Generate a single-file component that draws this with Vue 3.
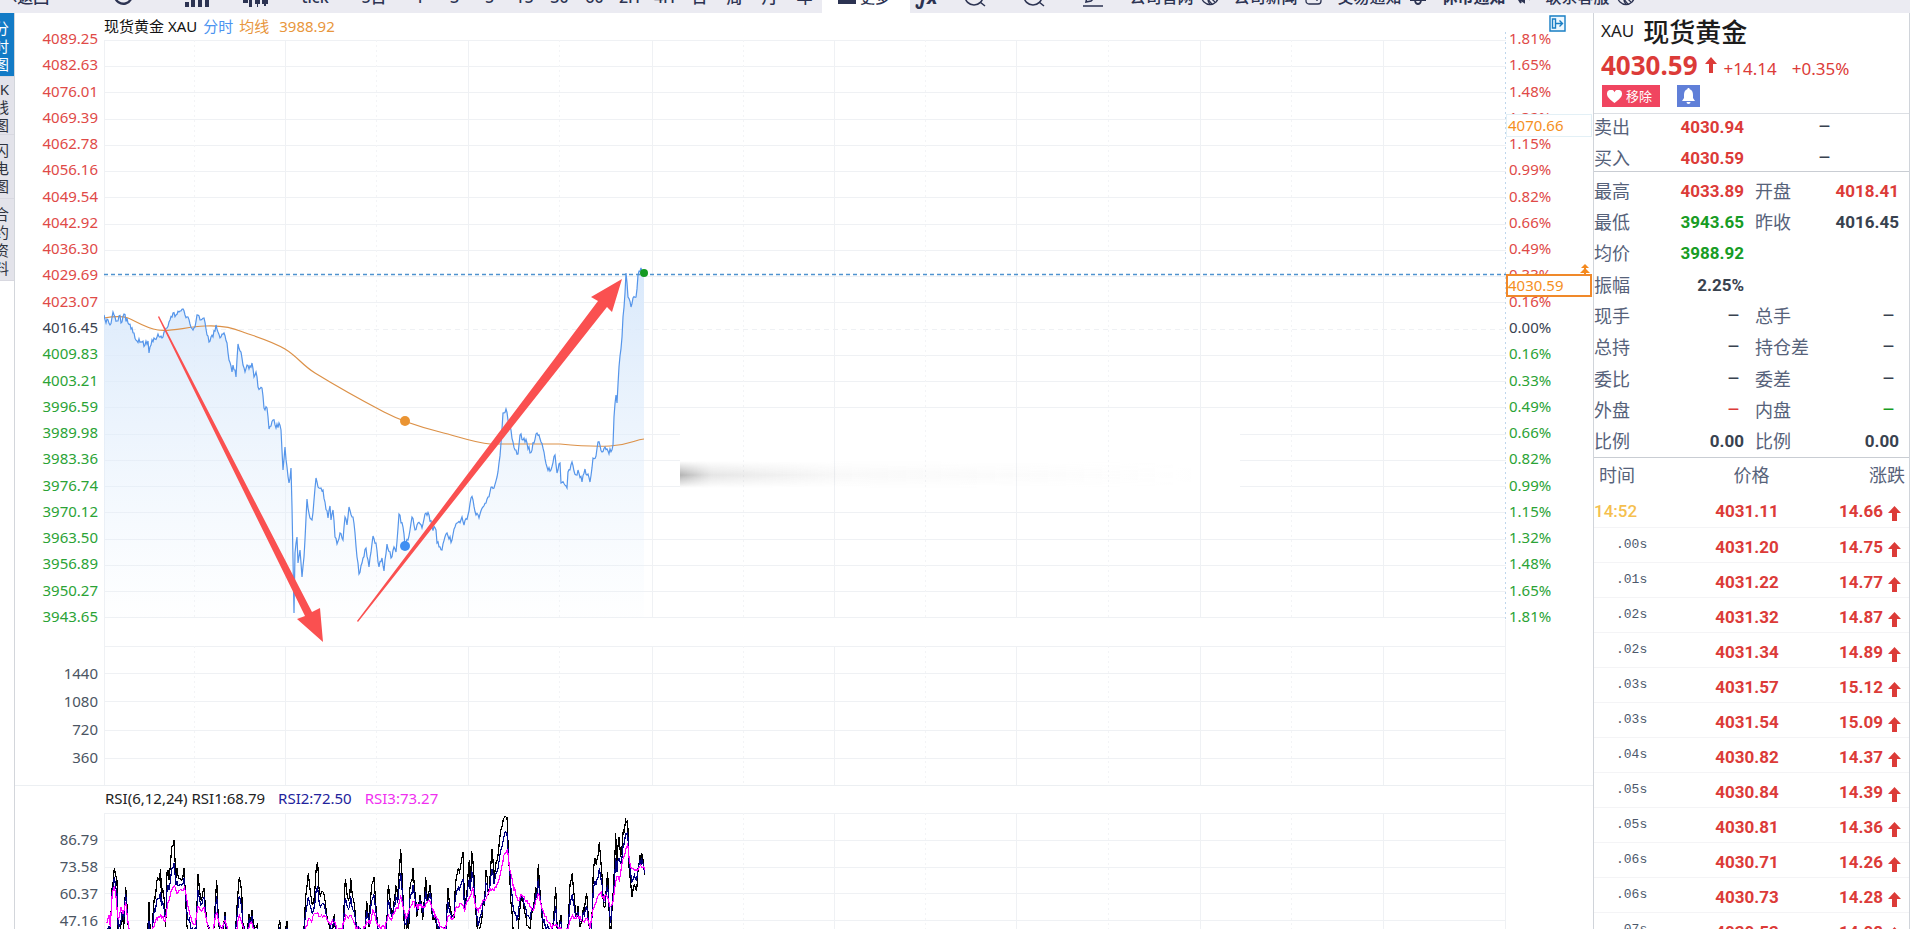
<script setup>
const periods = ['1', '3', '5', '15', '30', '60', '2H', '4H', '日', '周', '月', '年']
const links = [
  { text: '公司官网', icon: 'globe' },
  { text: '公司新闻', icon: 'news' },
  { text: '交易通知', icon: 'bell' },
  { text: '休市通知', icon: 'horn', strong: true },
  { text: '联系客服', icon: 'globe' },
]
const tabs = [
  { chars: '分时图', active: true },
  { chars: 'K线图', tight: true },
  { chars: '闪电图' },
  { chars: '合约资料' },
]

const prices = ['4089.25', '4082.63', '4076.01', '4069.39', '4062.78', '4056.16', '4049.54', '4042.92', '4036.30', '4029.69', '4023.07', '4016.45', '4009.83', '4003.21', '3996.59', '3989.98', '3983.36', '3976.74', '3970.12', '3963.50', '3956.89', '3950.27', '3943.65']
const half = ['1.81%', '1.65%', '1.48%', '1.32%', '1.15%', '0.99%', '0.82%', '0.66%', '0.49%', '0.33%', '0.16%']
const percents = [...half, '0.00%', ...[...half].reverse()]
const tone = (i) => (i < 11 ? 'up' : i > 11 ? 'down' : 'flat')
const volumes = ['1440', '1080', '720', '360']
const rsiLevels = ['86.79', '73.58', '60.37', '47.16']

const rowLines = Array.from({ length: 23 }, (_, i) => Math.round(40 + i * 26.24) + 0.5)
const lowLines = [645.5, 672.5, 700.5, 729.5, 757.5, 812.5, 839.5, 866.5, 892.5, 919.5].map((y) => y + 1)
const mainCols = [285.5, 468.5, 652.5, 834.5, 1016.5, 1200.5, 1383.5]
const midCols = [194.5, 376.5, 559.5, 743.5, 925.5, 1108.5, 1291.5]

// Adds a small repeatable ripple between the key points of a series
function ripple(points, step, amp) {
  const out = []
  let seed = 7
  points.forEach(([x, y], i) => {
    out.push([x, y])
    const next = points[i + 1]
    if (!next) return
    const n = Math.floor((next[0] - x) / step)
    for (let k = 1; k < n; k++) {
      seed = (seed * 1103515245 + 12345) % 2147483648
      const t = k / n
      const d = (seed / 2147483648 - 0.5) * 2 * amp
      out.push([x + (next[0] - x) * t, y + (next[1] - y) * t + d])
    }
  })
  return out
}
const pair = (s) => s.trim().split(/\s+/).map((p) => p.split(',').map(Number))
const toLine = (pts) => pts.map(([x, y]) => x.toFixed(1) + ',' + y.toFixed(1)).join(' ')

const priceKeys = pair(`104,315 106,323 107,319 110,325 113,312 115,317 117,321 119,316 122,322 124,314 128,323 131,329 134,333 137,341 142,342
145,345 148,341 149,353 151,345 154,338 157,337 158,334 161,336 163,337 167,328 170,320 173,313 176,315 179,312 183,309 185,315 188,317 190,324
193,330 195,327 197,315 200,320 204,318 207,335 209,342 211,337 213,337 216,325 218,332 221,337 224,333 227,343 229,360 232,372 233,365 236,377
238,344 241,352 243,365 245,372 247,365 249,369 252,363 254,377 256,372 258,387 262,388 264,408 267,408 269,429 273,420 276,428 279,423 281,430
283,470 285,447 287,467 289,483 291,468 292,507 294,613 295,553 297,537 298,563 300,550 301,563 302,577 304,557 307,499 310,518 312,520 314,500
316,478 319,488 323,490 325,502 328,518 330,506 331,520 333,510 335,537 337,544 340,533 343,540 345,517 347,525 349,507 353,517 355,533 357,557
359,574 362,563 366,548 369,567 373,536 376,543 379,567 382,558 384,571 387,544 391,558 394,547 396,552 399,514 403,527 405,546 408,540 412,517
415,530 418,523 422,528 425,514 429,515 432,527 436,530 437,543 442,550 447,533 449,539 452,540 455,527 462,517 464,525 468,515 471,498 473,500
476,515 479,518 483,507 488,497 492,487 494,488 497,477 499,463 501,443 503,413 506,409 509,422 511,430 513,442 516,450 518,454 520,435 523,440
527,443 530,453 534,443 537,433 541,442 544,452 547,467 551,470 555,455 557,473 560,463 561,483 567,488 568,472 572,462 576,475 578,470 582,482
585,469 590,482 593,458 596,456 598,442 602,452 605,447 609,454 613,445 614,417 616,395 617,403 619,367 622,337 623,317 625,293 626,273 628,297
631,307 633,298 636,297 638,275 641,268 644,273`)
const priceLine = toLine(ripple(priceKeys, 1, 3))
const priceArea = `104,618 ${priceLine} 644,618`
const avgPath = 'M104 318 C110 317 122 316 128 318 S145 328 158 330 S185 327 205 326 S235 329 243 332 S272 341 285 349 S302 365 315 373 S365 402 384 412 S420 427 440 432 S475 443 490 444 L560 444 S590 447 610 446 S634 440 644 439'

// RSI keys are stored on a grid three times finer than a pixel
const rsiFast = pair(`35,400 46,390 52,250 58,203 66,240 70,420 82,330 86,390 92,262 97,330 103,400 130,440 158,400 162,305 166,400 170,420 175,330 188,235
192,240 197,206 199,290 203,265 208,300 212,380 216,217 222,240 230,140 237,120 240,180 243,235 246,205 255,235 260,240 267,204 272,300 276,380 290,430
303,420 309,222 314,275 320,300 327,265 332,330 345,420 355,420 365,240 372,380 382,400 390,335 396,420 420,430 428,290 433,230 440,275 445,400 458,430
460,345 466,370 471,330 478,380 487,375 495,440 545,440 554,360 560,400 570,430 576,363 582,430 625,430 632,290 640,220 648,290 656,310 664,200 668,187
672,265 680,275 690,300 697,360 705,385 712,400 718,343 724,400 742,430 751,237 757,290 764,290 767,233 776,300 785,400 808,420 815,302 822,380 830,255
837,230 842,310 853,420 873,430 880,255 887,320 893,350 902,255 908,290 917,147 923,270 929,400 937,360 941,400 944,270 954,205 959,270 965,350 975,285
983,360 992,230 997,300 1005,255 1011,340 1020,360 1040,420 1053,400 1059,265 1067,330 1077,350 1083,240 1090,205 1096,205 1104,155 1109,330 1115,290
1123,180 1126,260 1130,152 1137,230 1143,340 1150,420 1158,370 1170,280 1173,210 1180,285 1187,200 1191,148 1197,240 1207,180 1217,90 1225,58 1236,53
1241,180 1247,300 1255,400 1265,430 1280,290 1290,340 1305,390 1315,320 1322,260 1325,290 1330,193 1337,300 1345,400 1370,430 1382,262 1387,400 1398,345
1402,430 1417,420 1425,255 1432,218 1438,290 1445,350 1449,318 1455,380 1475,280 1480,350 1488,420 1495,210 1500,175 1506,180 1513,125 1519,200 1525,310
1531,320 1538,215 1541,310 1547,420 1555,270 1562,100 1566,200 1572,110 1577,170 1585,90 1598,62 1602,200 1607,250 1611,290 1615,265 1625,270 1635,165
1638,195 1640,160 1649,225`)
const rsiSlow = pair(`35,370 42,345 46,380 52,280 58,258 63,290 70,360 78,320 84,340 92,305 97,350 105,400 130,420 165,420 175,380 190,350 197,345 204,350
210,365 218,310 225,290 232,268 238,258 245,280 255,270 262,272 268,262 276,300 285,345 292,370 300,375 309,320 316,330 327,322 335,365 345,390 355,390
365,335 370,360 380,390 390,360 400,400 422,400 433,345 442,375 455,400 470,365 480,400 550,410 620,410 635,380 642,355 650,365 660,340 668,337 676,350
690,350 700,365 718,365 728,390 742,385 752,345 760,355 768,345 780,375 800,400 815,365 825,370 834,330 840,345 850,380 870,385 880,345 890,360 902,325
910,325 917,290 925,325 933,355 943,330 954,305 963,320 990,320 1005,305 1013,330 1025,355 1035,380 1050,385 1059,350 1075,355 1085,320 1103,315 1109,335
1115,305 1125,290 1133,262 1140,310 1150,335 1165,300 1175,290 1185,265 1195,270 1207,250 1220,200 1230,160 1237,148 1243,200 1253,250 1265,290 1273,300
1280,285 1290,300 1305,320 1315,330 1323,300 1330,280 1337,310 1350,350 1370,385 1385,375 1397,385 1420,385 1432,345 1443,355 1455,350 1465,365 1475,355
1485,385 1493,330 1505,300 1515,280 1525,290 1537,290 1545,320 1555,300 1565,230 1573,240 1583,180 1598,130 1605,190 1613,205 1625,210 1637,195 1649,210`)
function at(points, x) {
  const i = points.findIndex((p) => p[0] >= x)
  if (i <= 0) return points[0][1]
  const [a, b] = [points[i - 1], points[i]]
  return a[1] + ((b[1] - a[1]) * (x - a[0])) / (b[0] - a[0])
}
const rsiMid = rsiFast.map(([x, y]) => [x, y * 0.5 + at(rsiSlow, x) * 0.5])
const scale = (pts) => pts.map(([x, y]) => [95 + x / 3, 800 + Math.max(y, 50) / 3])
const rsiLines = [
  { color: '#000000', points: toLine(scale(ripple(rsiFast, 3, 18))) },
  { color: '#000080', points: toLine(scale(ripple(rsiMid, 3, 14))) },
  { color: '#ff00ff', points: toLine(scale(ripple(rsiSlow, 3, 8))) },
]

const depth = [
  { label: '卖出', value: '4030.94' },
  { label: '买入', value: '4030.59' },
]
const stats = [
  ['最高', '4033.89', 'up', '开盘', '4018.41', 'up'],
  ['最低', '3943.65', 'down', '昨收', '4016.45', 'flat'],
  ['均价', '3988.92', 'down', '', '', ''],
  ['振幅', '2.25%', 'flat', '', '', ''],
  ['现手', '–', 'flat', '总手', '–', 'flat'],
  ['总持', '–', 'flat', '持仓差', '–', 'flat'],
  ['委比', '–', 'flat', '委差', '–', 'flat'],
  ['外盘', '–', 'up', '内盘', '–', 'down'],
  ['比例', '0.00', 'flat', '比例', '0.00', 'flat'],
]
const trades = [
  ['14:52', '4031.11', '14.66'], ['.00s', '4031.20', '14.75'], ['.01s', '4031.22', '14.77'],
  ['.02s', '4031.32', '14.87'], ['.02s', '4031.34', '14.89'], ['.03s', '4031.57', '15.12'],
  ['.03s', '4031.54', '15.09'], ['.04s', '4030.82', '14.37'], ['.05s', '4030.84', '14.39'],
  ['.05s', '4030.81', '14.36'], ['.06s', '4030.71', '14.26'], ['.06s', '4030.73', '14.28'],
  ['.07s', '4030.53', '14.08'],
]
</script>

<template>
  <div class="app">
    <header class="toolbar">
      <nav class="tools" aria-label="工具栏">
        <button class="tool back">‹返回</button>
        <button class="tool refresh" aria-label="刷新">
          <svg width="22" height="22" viewBox="0 0 22 22" fill="none" stroke="currentColor" stroke-width="2.4"><path d="M18 5a8.5 8.5 0 1 0 1 9M19 2v5h-5" /></svg>
        </button>
        <button class="tool bars" aria-label="分时">
          <svg width="24" height="22" viewBox="0 0 24 22" fill="currentColor"><path d="M0 17h4v5H0zM6 10h4v12H6zM13 5h4v17h-4zM20 0h4v22h-4z" /></svg>
        </button>
        <button class="tool candle" aria-label="K线">
          <svg width="26" height="22" viewBox="0 0 26 22" fill="currentColor"><path d="M0 14h5v4H0zM6 2h3v20H6zM12 6h5v13h-5zM14 2h1v20h-1zM19 6h6v13h-6zM21 2h2v19h-2z" /></svg>
        </button>
        <button class="tool tick">tick</button>
        <button class="tool days">5日</button>
        <button v-for="p in periods" :key="p" class="tool period">{{ p }}</button>
        <button class="tool more">
          <svg width="18" height="18" viewBox="0 0 18 18" fill="currentColor"><path d="M0 0h18v3H0zM0 7h18v3H0zM0 14h18v4H0z" /></svg>更多
        </button>
        <button class="tool fx">ƒx</button>
        <button class="tool lens" aria-label="放大">
          <svg width="22" height="22" viewBox="0 0 22 22" fill="none" stroke="currentColor" stroke-width="1.6"><circle cx="10" cy="11" r="9" /><path d="M16 17l5 4M6 11h8M10 7v8" /></svg>
        </button>
        <button class="tool lens" aria-label="缩小">
          <svg width="22" height="22" viewBox="0 0 22 22" fill="none" stroke="currentColor" stroke-width="1.6"><circle cx="10" cy="11" r="9" /><path d="M16 17l5 4M6 11h8" /></svg>
        </button>
        <button class="tool lens" aria-label="画线">
          <svg width="20" height="22" viewBox="0 0 20 22" fill="none" stroke="currentColor" stroke-width="1.6"><path d="M0 21h20M3 17l1-5L14 2l4 4L8 16z" /></svg>
        </button>
        <a v-for="l in links" :key="l.text" href="#" class="tool link" :class="{ strong: l.strong }">
          {{ l.text }}
          <svg width="18" height="20" viewBox="0 0 18 20" fill="none" stroke="currentColor" stroke-width="1.3">
            <template v-if="l.icon === 'globe'"><circle cx="9" cy="10" r="8.5" /><path d="M2 5c3 4 4 8 9 13M5 2c2 6 4 10 9 14M9 18c-4-4-1-8 2-7s4 3 5 3" /></template>
            <path v-else-if="l.icon === 'news'" d="M1 2h15v13a3 3 0 0 1-3 3H4a3 3 0 0 1-3-3zM4 9h6M4 13h6M12 7v8" />
            <path v-else-if="l.icon === 'bell'" d="M1 14h16M3 14c2-3 0-9 6-11 6 2 4 8 6 11M6 15c1 4 5 4 6 0" stroke-width="1.8" />
            <path v-else d="M1 7h4l6-5v14l-6-4H1zM5 12l3 5M14 5l3 9" stroke-width="2" />
          </svg>
        </a>
      </nav>
    </header>

    <div class="body">
      <nav class="tabs" aria-label="图表类型">
        <button v-for="t in tabs" :key="t.chars" class="tab" :class="{ active: t.active, tight: t.tight }">
          <span v-for="c in t.chars" :key="c">{{ c }}</span>
        </button>
      </nav>

      <main class="chart">
        <div class="axis left">
          <ul class="scale price"><li v-for="(p, i) in prices" :key="p" :class="tone(i)">{{ p }}</li></ul>
          <ul class="scale volume"><li v-for="v in volumes" :key="v">{{ v }}</li></ul>
          <ul class="scale rsi"><li v-for="r in rsiLevels" :key="r">{{ r }}</li></ul>
        </div>

        <svg class="plot" viewBox="104 13 1402 916" preserveAspectRatio="none">
          <defs>
            <linearGradient id="area" gradientUnits="userSpaceOnUse" x1="0" y1="270" x2="0" y2="610">
              <stop offset="0" stop-color="#dae9fb" /><stop offset="1" stop-color="#e2effc" stop-opacity="0.05" />
            </linearGradient>
            <linearGradient id="fade">
              <stop offset="0" stop-color="#666" stop-opacity="0.5" /><stop offset="0.06" stop-color="#888" stop-opacity="0.22" />
              <stop offset="0.3" stop-color="#aaa" stop-opacity="0.08" /><stop offset="1" stop-color="#aaa" stop-opacity="0" />
            </linearGradient>
            <linearGradient id="soft" x2="0" y2="1">
              <stop offset="0" stop-color="#000" /><stop offset="0.52" stop-color="#fff" /><stop offset="1" stop-color="#000" />
            </linearGradient>
            <mask id="band"><rect x="680" y="461" width="520" height="27" fill="url(#soft)" /></mask>
          </defs>
          <g class="grid">
            <path v-for="y in rowLines" :key="y" :d="`M104 ${y}H1506`" :class="{ zero: y === rowLines[11] }" />
          </g>
          <rect x="680" y="425" width="560" height="72" fill="#fff" />
          <g class="grid">
            <path v-for="y in lowLines" :key="y" :d="`M104 ${y}H1506`" />
            <path v-for="x in mainCols" :key="x" :d="`M${x} 40V618M${x} 646V785M${x} 813V929`" />
            <path v-for="x in midCols" :key="x" class="dots" :d="`M${x} 40V618M${x} 646V785M${x} 813V929`" />
            <path d="M104.5 40V785M104.5 813V929M1505.5 620V929" />
          </g>
          <path class="edge" d="M1505.5 32V620" />
          <rect x="680" y="461" width="520" height="27" fill="url(#fade)" mask="url(#band)" />
          <polygon :points="priceArea" fill="url(#area)" />
          <path :d="avgPath" fill="none" stroke="#dc9148" stroke-width="1.2" />
          <polyline :points="priceLine" fill="none" stroke="#5595ea" stroke-width="1.2" />
          <path class="current" d="M104 274.500H1506" />
          <polyline v-for="l in rsiLines" :key="l.color" :points="l.points" fill="none" :stroke="l.color" stroke-width="1.2" shape-rendering="crispEdges" />
          <circle cx="405" cy="421" r="5" fill="#ea9433" />
          <circle cx="405" cy="546" r="5" fill="#3f8ff2" />
          <circle cx="644" cy="273" r="4" fill="#159a22" />
          <g fill="#fa5050">
            <polygon points="158,317 305,616 297,619 323,642 320,608 312,612 159,316" />
            <polygon points="357,621 598,301 591,297 622,279 612,312 607,307 358,622" />
          </g>
        </svg>

        <div class="legends">
          <p class="legend"><b>现货黄金 XAU</b><span class="line">分时</span><span class="avg">均线</span><span class="avg value">3988.92</span></p>
          <p class="legend lower"><b>RSI(6,12,24) RSI1:68.79</b><span class="rsi2">RSI2:72.50</span><span class="rsi3">RSI3:73.27</span></p>
        </div>

        <div class="axis right">
          <ul class="scale price"><li v-for="(p, i) in percents" :key="i" :class="tone(i)">{{ p }}</li></ul>
          <button class="expand" aria-label="展开">
            <svg width="17" height="17" viewBox="0 0 17 17" fill="none" stroke="#1b7fc4" stroke-width="1.400"><path d="M1 1h15v15H1zM3.500 4h3v9h-3zM7 8.500h6M10.500 5.500l3 3-3 3" /></svg>
          </button>
          <span class="tag cursor">4070.66</span>
          <span class="tag last">4030.59</span>
          <svg class="pin" width="10" height="10" viewBox="0 0 10 10" fill="#f58a1f"><path d="M5 0l4 4H6v1l4 4H6v1H4V9H0l4-4V4H1z" /></svg>
        </div>
      </main>

      <aside class="panel">
        <header class="quote">
          <h1><small>XAU</small>现货黄金</h1>
          <p class="now up">
            <strong>4030.59</strong>
            <svg width="12" height="16" viewBox="0 0 12 16" fill="currentColor"><path d="M6 0l6 7H8v9H4V7H0z" /></svg>
            <span>+14.14</span><span>+0.35%</span>
          </p>
          <div class="actions">
            <button class="remove">
              <svg width="15" height="13" viewBox="0 0 15 13" fill="#fff"><path d="M7.500 13C3 9.500 0 7 0 4a3.900 3.900 0 0 1 7.500-1.800A3.900 3.900 0 0 1 15 4c0 3-3 5.500-7.500 9z" /></svg>移除
            </button>
            <button class="alert" aria-label="提醒">
              <svg width="13" height="16" viewBox="0 0 13 16" fill="#fff"><path d="M6.500 0c.8 0 1.200.6 1.200 1.300C10 2 11 4 11 7v3l2 3H0l2-3V7c0-3 1-5 3.300-5.700C5.300.6 5.700 0 6.500 0zM4.500 14h4a2 2 0 0 1-4 0z" /></svg>
            </button>
          </div>
        </header>

        <dl class="depth">
          <div v-for="d in depth" :key="d.label" class="row">
            <dt>{{ d.label }}</dt><dd class="up">{{ d.value }}</dd><dd class="dash size">–</dd>
          </div>
        </dl>

        <dl class="stats">
          <div v-for="(s, i) in stats" :key="i" class="row">
            <dt>{{ s[0] }}</dt><dd :class="[s[2], { dash: s[1] === '–' }]">{{ s[1] }}</dd>
            <dt class="second">{{ s[3] }}</dt><dd :class="[s[5], { dash: s[4] === '–' }]">{{ s[4] }}</dd>
          </div>
        </dl>

        <table class="trades">
          <thead><tr><th scope="col">时间</th><th scope="col">价格</th><th scope="col">涨跌</th></tr></thead>
          <tbody>
            <tr v-for="(t, i) in trades" :key="i">
              <td :class="i ? 'sec' : 'minute'">{{ t[0] }}</td>
              <td class="deal">{{ t[1] }}</td>
              <td class="change">{{ t[2] }}<svg width="13" height="15" viewBox="0 0 13 15" fill="currentColor"><path d="M6.500 0L13 7H9v8H4V7H0z" /></svg></td>
            </tr>
          </tbody>
        </table>
      </aside>
    </div>
  </div>
</template>

<style>
body { margin: 0; overflow: hidden; background: #fff; }
</style>

<style scoped>
.app { height: 100vh; overflow: hidden; display: flex; flex-direction: column; font-family: "Noto Sans", "Noto Sans CJK SC", sans-serif; color: #39424f; }
button { border: 0; padding: 0; margin: 0; background: none; font: inherit; color: inherit; }
p, ul, dl, dd, h1 { margin: 0; padding: 0; }
ul { list-style: none; }

.toolbar { height: 13px; flex: none; display: flex; align-items: flex-end; overflow: hidden; background: #ebebf2; color: #2c3352; }
.tools { display: flex; height: 32px; flex: none; }
.tool { flex: none; height: 32px; display: flex; align-items: center; justify-content: center; font-size: 16px; line-height: 20px; font-weight: 500; white-space: nowrap; box-sizing: border-box; }
.tool svg { margin-top: -2px; }
.back { width: 80px; justify-content: flex-start; padding-left: 12px; }
.refresh { width: 86px; }
.bars { width: 62px; }
.candle { width: 56px; }
.tick { width: 62px; }
.days { width: 56px; }
.period { width: 35px; }
.more { width: 88px; gap: 4px; background: #fff; font-size: 15px; padding-right: 4px; }
.more svg { margin-top: -4px; }
.fx { width: 35px; font-size: 20px; font-style: italic; font-weight: 700; }
.lens { width: 59px; }
.link { width: 104px; gap: 7px; color: inherit; text-decoration: none; }
.link.strong { font-weight: 700; }

.body { flex: 1; min-height: 0; display: flex; overflow: hidden; }
.tabs { width: 14px; flex: none; border-right: 1px solid #d3d6db; overflow: hidden; }
.tab { display: flex; flex-direction: column; align-items: flex-end; width: 14px; padding: 6px 5px 3px 0; box-sizing: border-box; background: #e3e3ea; border-bottom: 1px solid #d8d8e0; font-size: 15px; line-height: 18px; color: #2f3440; }
.tab.tight { padding: 3px 5px 0 0; }
.tab.active { background: #127bc6; color: #fff; }

.chart { flex: 1; min-width: 0; display: grid; grid-template-columns: 89px minmax(0, 1fr) 87px; grid-template-rows: 916px; font-size: 15px; line-height: 20px; background: linear-gradient(#eceff2, #eceff2) 0 772px / 100% 1px no-repeat; }
.axis { display: flex; flex-direction: column; }
.left { grid-column: 1; text-align: right; padding-right: 6px; }
.scale { flex: none; display: grid; grid-auto-rows: 1fr; align-items: center; }
.price { height: 604px; margin-top: 12px; }
.volume { height: 112px; margin-top: 30px; }
.rsi { height: 108px; margin-top: 54px; }
.volume, .rsi { color: #4b5563; }
.up { color: #dc3b38; }
.down { color: #179c24; }
.flat { color: #39424f; }
.scale .up { color: #e04a47; }
.scale .down { color: #2ba336; }

.plot { grid-column: 2; grid-row: 1; width: 100%; height: 916px; display: block; }
.grid path { stroke: #eff1f4; stroke-width: 1; fill: none; }
.grid .dots { stroke: #f3f4f6; stroke-dasharray: 2 3; }
.grid .zero { stroke-dasharray: 5 4; }
.edge { stroke: #bfd6ec; stroke-dasharray: 2 3; }
.current { stroke: #4f93cf; stroke-width: 1.500; stroke-dasharray: 4 3; }

.legends { grid-column: 2; grid-row: 1; }
.legend { display: flex; gap: 6px; padding-top: 3px; height: 20px; white-space: nowrap; color: #111; }
.legend b { font-weight: 400; }
.legend .line { color: #4b93f0; }
.legend .avg { color: #e8963c; }
.legend .value { margin-left: 4px; }
.legend.lower { gap: 13px; margin-top: 749px; padding-left: 1px; color: #222; }
.rsi2 { color: #22229c; }
.rsi3 { color: #f02ff0; }

.right { grid-column: 3; grid-row: 1; position: relative; }
.right .price { padding-left: 3px; }
.tag { position: absolute; left: 0; right: 1px; box-sizing: border-box; height: 23px; line-height: 19px; padding-left: 1px; background: #fff; color: #f58f1e; border: 1px solid #e3f0f6; }
.cursor { top: 101px; line-height: 20px; }
.last { top: 261px; border: 2px solid #f0892a; padding-left: 0; line-height: 18px; }
.expand { position: absolute; top: 2px; left: 43px; height: 17px; line-height: 0; background: #eef8ff; }
.pin { position: absolute; top: 251px; right: 3px; }

.panel { width: 317px; flex: none; box-sizing: border-box; border-left: 1px solid #d0d4da; border-right: 1px solid #d0d4da; overflow: hidden; }
.quote { height: 100px; padding-left: 7px; border-bottom: 1px solid #dcdfe4; }
h1 { display: flex; align-items: center; gap: 9px; height: 36px; font-family: "Noto Sans CJK SC", sans-serif; font-size: 26px; line-height: 36px; font-weight: 500; color: #1c1c1c; }
h1 small { font-family: "Noto Sans", sans-serif; font-size: 17px; font-weight: 400; }
.now { display: flex; align-items: center; height: 32px; font-size: 17px; line-height: 32px; }
.now strong { font-size: 26px; font-weight: 700; }
.now svg { margin: 0 7px 0 7px; }
.now span { padding-top: 8px; margin-right: 15px; }
.actions { display: flex; gap: 17px; padding: 4px 0 0 1px; }
.remove { display: flex; align-items: center; gap: 4px; width: 58px; height: 22px; padding-left: 5px; box-sizing: border-box; background: #f04560; color: #fff; font-size: 13px; line-height: 22px; }
.alert { display: flex; align-items: center; justify-content: center; width: 23px; height: 22px; background: #607fd8; }

.row { display: grid; grid-template-columns: 60px 90px 66px 89px; align-items: center; }
.row dt { font-size: 18px; line-height: 26px; color: #56627a; white-space: nowrap; }
.row .second { padding-left: 11px; }
.row dd { text-align: right; font-family: Roboto, sans-serif; font-size: 17px; line-height: 26px; font-weight: 700; }
.row .dash { padding-right: 4px; font-size: 20px; font-weight: 400; }
.depth { display: grid; row-gap: 5px; border-bottom: 1px solid #c9cdd3; }
.depth .row .size { grid-column: 3 / 5; padding-right: 68px; }
.stats { display: grid; grid-auto-rows: 1fr; height: 282px; padding-top: 3px; border-bottom: 1px solid #c9cdd3; }

.trades { width: 100%; border-collapse: collapse; table-layout: fixed; }
.trades th { height: 34px; padding: 0; font-size: 18px; line-height: 26px; font-weight: 400; color: #56627a; }
.trades th:first-child { text-align: left; padding-left: 5px; width: 104px; }
.trades th:nth-child(2) { text-align: center; width: 97px; padding-right: 6px; }
.trades th:last-child { text-align: right; padding-right: 4px; }
.trades td { height: 35px; box-sizing: border-box; padding: 4px 0 0; line-height: 24px; font-family: Roboto, sans-serif; font-size: 17px; font-weight: 700; color: #dc3b38; border-bottom: 1px solid #f4f4f6; }
.trades .minute { color: #f5bf4f; font-weight: 500; }
.trades .sec { padding: 0 0 0 22px; font-family: "Liberation Mono", monospace; font-size: 13px; font-weight: 400; color: #4c586c; }
.trades .deal { text-align: center; padding-right: 15px; }
.trades .change { text-align: right; padding-right: 8px; }
.change svg { margin-left: 5px; vertical-align: -4px; }
</style>
